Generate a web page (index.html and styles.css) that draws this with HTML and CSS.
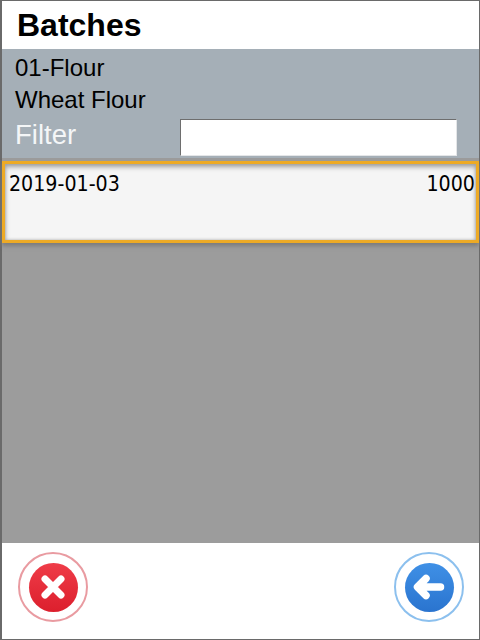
FILE: index.html
```html
<!DOCTYPE html>
<html lang="en">
<head>
  <meta charset="UTF-8">
  <meta name="viewport" content="width=device-width, initial-scale=1.0">
  <title>Batches</title>
  <link rel="stylesheet" href="styles.css">
</head>
<body>
  <div class="screen">
    <header class="title-bar">
      <h1>Batches</h1>
    </header>
    <section class="item-info">
      <div class="info-line">01-Flour</div>
      <div class="info-line">Wheat Flour</div>
      <div class="filter-row">
        <label class="filter-label" for="filter">Filter</label>
        <input class="filter-input" id="filter" type="text">
      </div>
    </section>
    <main class="batch-list">
      <div class="batch-row">
        <span>2019-01-03</span>
        <span>1000</span>
      </div>
    </main>
    <footer class="button-bar">
      <button class="round-btn cancel" aria-label="Cancel">
        <span class="btn-face">
          <svg width="34" height="34" viewBox="0 0 34 34">
            <path d="M9 9L25 25M25 9L9 25" stroke="#fff" stroke-width="7" stroke-linecap="round" fill="none"/>
          </svg>
        </span>
      </button>
      <button class="round-btn back" aria-label="Back">
        <span class="btn-face">
          <svg width="34" height="34" viewBox="0 0 34 34">
            <path d="M14 8.5L5.5 17L14 25.5M6 17H28.5" stroke="#fff" stroke-width="7.5" stroke-linecap="round" stroke-linejoin="round" fill="none"/>
          </svg>
        </span>
      </button>
    </footer>
  </div>
</body>
</html>
```

FILE: styles.css
```css
html, body {
  margin: 0;
  padding: 0;
}
.screen {
  box-sizing: border-box;
  width: 480px;
  height: 640px;
  display: flex;
  flex-direction: column;
  border: solid 1px #6a6a6a;
  border-left-width: 2px;
  background: #fff;
  font-family: "Liberation Sans", Arial, sans-serif;
}
.title-bar {
  height: 48px;
  display: flex;
  align-items: center;
  padding-left: 15px;
  background: #fff;
}
h1 {
  margin: 0;
  font-size: 32px;
  font-weight: bold;
  color: #000;
}
.item-info {
  height: 109px;
  box-sizing: border-box;
  padding: 3px 0 0 13px;
  background: #a5afb7;
}
.info-line {
  height: 32px;
  line-height: 32px;
  font-size: 24px;
  color: #000;
}
.filter-row {
  display: flex;
  align-items: flex-start;
  justify-content: space-between;
  height: 40px;
  padding-right: 22px;
}
.filter-label {
  font-size: 27.5px;
  line-height: 38px;
  color: #f4f6f7;
}
.filter-input {
  box-sizing: border-box;
  width: 277px;
  height: 37px;
  margin-top: 3px;
  padding: 0;
  background: #fff;
  border: solid 1px #e4e6e8;
  border-top: solid 1px #6e6e6e;
  border-left: solid 1px #6e6e6e;
}
.batch-list {
  flex: 1;
  padding-top: 3px;
  background: #9c9c9c;
}
.batch-row {
  box-sizing: border-box;
  height: 82px;
  display: flex;
  justify-content: space-between;
  padding: 7px 1px 0 4px;
  background: #f5f5f5;
  border: solid 3px #edaa25;
  box-shadow: inset 0 3px 5px #a0a0a0, inset 0 0 3px #b0b0b0, 0 3px 4px #7c7c7c;
  font-family: "DejaVu Sans", sans-serif;
  font-stretch: condensed;
  font-size: 21.2px;
  color: #000;
}
.button-bar {
  box-sizing: border-box;
  height: 96px;
  display: flex;
  justify-content: space-between;
  padding: 9px 15px 0 16px;
  background: #fff;
}
.round-btn {
  box-sizing: border-box;
  width: 70px;
  height: 70px;
  padding: 0;
  display: flex;
  align-items: center;
  justify-content: center;
  border-radius: 50%;
  background: #fff;
}
.btn-face {
  width: 49px;
  height: 49px;
  display: flex;
  align-items: center;
  justify-content: center;
  border-radius: 50%;
}
.cancel {
  border: solid 2px #e99ba1;
}
.cancel .btn-face {
  background: linear-gradient(#ef3c48, #dc1f2d);
}
.back {
  border: solid 2px #8cc0ee;
}
.back .btn-face {
  background: linear-gradient(#3f90e6, #2a74cf);
}
```
